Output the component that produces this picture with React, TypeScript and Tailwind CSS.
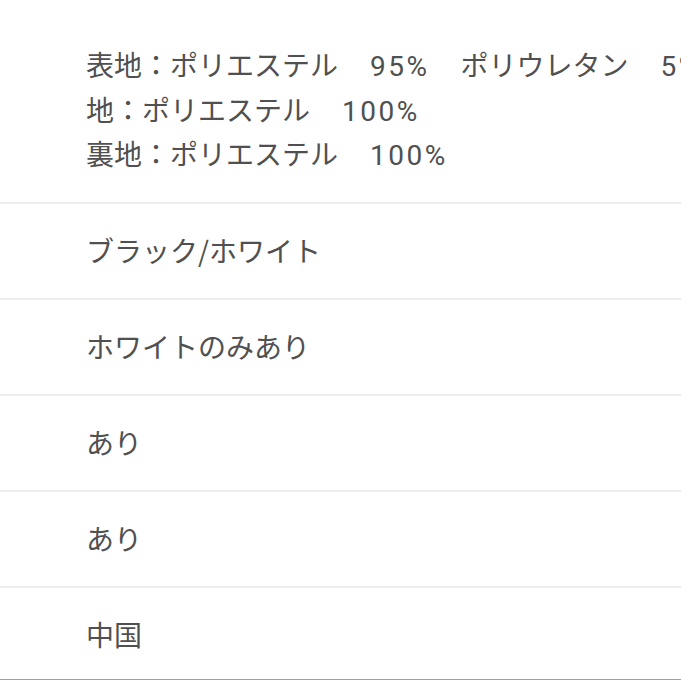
import React from "react";

const font = { fontFamily: '"Noto Sans CJK JP", sans-serif' };

function Num({ children }: { children: React.ReactNode }) {
  return (
    <span className="ml-[32px] tracking-[2.5px] leading-none font-['Roboto',sans-serif]">
      {children}
    </span>
  );
}

function Jp({ children }: { children: React.ReactNode }) {
  return <span className="ml-[31px]">{children}</span>;
}

export default function App() {
  const rows = ["ブラック/ホワイト", "ホワイトのみあり", "あり", "あり", "中国"];
  return (
    <div
      className="w-[681px] h-[681px] overflow-hidden bg-white text-[#505050] text-[28px] relative"
      style={font}
    >
      <div className="h-[202px] pt-[42px] pl-[86px] whitespace-nowrap leading-[44.5px]">
        <div className="h-[44.5px]">
          表地：ポリエステル<Num>95%</Num>
          <Jp>ポリウレタン</Jp>
          <Num>5%</Num>
        </div>
        <div className="h-[44.5px]">
          地：ポリエステル<Num>100%</Num>
        </div>
        <div className="h-[44.5px]">
          裏地：ポリエステル<Num>100%</Num>
        </div>
      </div>
      {rows.map((r, i) => (
        <div
          key={i}
          className="h-[96px] border-t-2 border-[#ececec] flex items-center pl-[86px] whitespace-nowrap pb-[2px]"
        >
          {r}
        </div>
      ))}
      <div className="absolute left-0 right-0 top-[679px] h-px bg-[#a0a0a0]" />
    </div>
  );
}
